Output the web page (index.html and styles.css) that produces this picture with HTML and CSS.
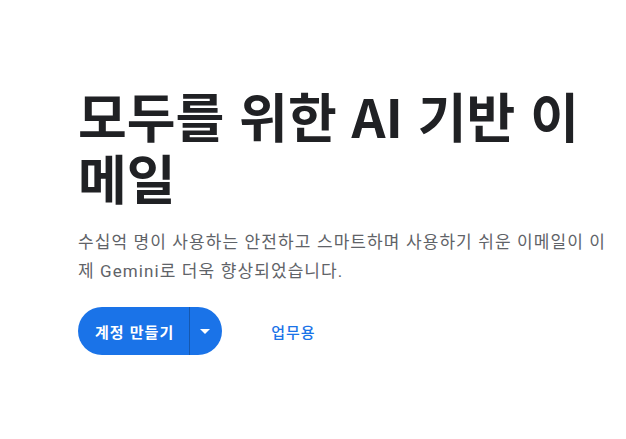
FILE: index.html
```html
<!DOCTYPE html>
<html lang="ko">
<head>
<meta charset="utf-8">
<link rel="stylesheet" href="styles.css">
</head>
<body>
<main class="hero">
  <h1 class="title">모두를 위한 AI 기반 이메일</h1>
  <p class="lead">수십억 명이 사용하는 안전하고 스마트하며 사용하기 쉬운 이메일이 이제 Gemini로 더욱 향상되었습니다.</p>
  <div class="actions">
    <div class="split">
      <a class="split-main" href="#">계정 만들기</a>
      <span class="split-sep"></span>
      <a class="split-drop" href="#" aria-label="더보기">
        <svg width="10" height="5" viewBox="0 0 10 5"><path d="M0 0h10L5 5z" fill="#fff"/></svg>
      </a>
    </div>
    <a class="link" href="#">업무용</a>
  </div>
</main>
</body>
</html>
```
FILE: styles.css
```css
html, body {
  margin: 0;
  padding: 0;
  background: #fff;
}
body {
  font-family: "Noto Sans CJK KR", "Noto Sans", sans-serif;
  color: #202124;
}
.hero {
  padding: 84px 0 0 78px;
  width: 540px;
}
.title {
  margin: 0;
  width: 530px;
  font-size: 53px;
  line-height: 62px;
  font-weight: 700;
  color: #202124;
}
.lead {
  margin: 20px 0 0;
  font-family: Roboto, "Noto Sans CJK KR", sans-serif;
  font-size: 17px;
  line-height: 29px;
  letter-spacing: 1.1px;
  color: #5f6368;
}
.actions {
  margin-top: 21px;
  display: flex;
  align-items: center;
  gap: 49px;
}
.split {
  display: flex;
  align-items: stretch;
  height: 48px;
  background: #1a73e8;
  border-radius: 24px;
}
.split-main {
  display: flex;
  align-items: center;
  padding: 0 15px 0 17px;
  color: #fff;
  font-size: 15px;
  font-weight: 700;
  letter-spacing: 1px;
  text-decoration: none;
}
.split-sep {
  width: 1px;
  background: #1558b0;
}
.split-drop {
  display: flex;
  align-items: center;
  justify-content: center;
  width: 30px;
  padding-right: 2px;
}
.link {
  color: #1a73e8;
  font-size: 15px;
  font-weight: 500;
  letter-spacing: 1px;
  text-decoration: none;
}
```
